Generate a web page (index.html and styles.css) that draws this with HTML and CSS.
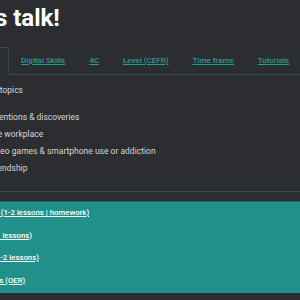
FILE: index.html
```html
<!DOCTYPE html>
<html lang="en">
<head>
    <meta charset="UTF-8">
    <meta name="viewport" content="width=device-width, initial-scale=1.0">
    <title>Let's talk!</title>
    <link rel="stylesheet" href="styles.css">
</head>
<body>

<div class="page">
    <h1>Let's talk!</h1>

    <!-- Pestañas -->
    <ul class="tabs">
        <li class="tab active"><a href="#">Tasks</a></li>
        <li class="tab"><a href="#">Digital Skills</a></li>
        <li class="tab"><a href="#">4C</a></li>
        <li class="tab"><a href="#">Level (CEFR)</a></li>
        <li class="tab"><a href="#">Time frame</a></li>
        <li class="tab"><a href="#">Tutorials</a></li>
    </ul>

    <div class="task">
        <p class="lead">All topics</p>
        <ul class="topics">
            <li>Inventions &amp; discoveries</li>
            <li>The workplace</li>
            <li>Video games &amp; smartphone use or addiction</li>
            <li>Friendship</li>
        </ul>
    </div>

    <hr class="divider">

    <div class="lessons">
        <a href="#">Speaking (1-2 lessons | homework)</a>
        <a href="#">Writing (1 lessons)</a>
        <a href="#">Debate (1-2 lessons)</a>
        <a href="#">Resources (OER)</a>
    </div>
</div>

</body>
</html>
```

FILE: styles.css
```css
/* Estilos generales */
body {
    font-family: Roboto, "Liberation Sans", sans-serif;
    margin: 0;
    padding: 0;
    background-color: #2b2d31;
    color: #d6d6d6;
    overflow: hidden;
}
.page {
    margin-left: -42px;
    width: 400px;
}
h1 {
    font-size: 24px;
    font-weight: bold;
    color: #fff;
    line-height: 28px;
    margin: 0;
    padding: 4px 0 0 0;
}

/* Pestañas */
.tabs {
    list-style: none;
    margin: 15px 0 0 0;
    padding: 0;
    display: flex;
    border-bottom: 1px solid #38494d;
}
.tab {
    margin-bottom: -1px;
}
.tab.active {
    border: 1px solid #38494d;
    border-bottom-color: #2b2d31;
}
.tab a {
    display: block;
    padding: 9px 12px 8px;
    font-size: 8px;
    line-height: 10px;
    font-weight: 500;
    color: #2a9c96;
}
.tab.active a {
    padding: 8px 14px;
    color: #d6d6d6;
    text-decoration: none;
}

/* Tarea */
.task {
    padding-left: 30px;
    font-size: 8.5px;
    line-height: 10px;
}
.lead {
    margin: 10px 0 0 0;
}
.topics {
    list-style: none;
    margin: 17px 0 0 0;
    padding: 0;
}
.topics li {
    margin-bottom: 7px;
}

.divider {
    border: none;
    border-top: 1px solid #3b4a4e;
    margin: 18px 0 0 0;
}

/* Lecciones */
.lessons {
    background: #21908b;
    border-top: 1px solid #34585b;
    margin-top: 9px;
    padding: 6px 0 7px 8.5px;
    display: flex;
    flex-direction: column;
    gap: 12px;
}
.lessons a {
    color: #fff;
    font-size: 7.8px;
    line-height: 10.5px;
    font-weight: 500;
}
```
